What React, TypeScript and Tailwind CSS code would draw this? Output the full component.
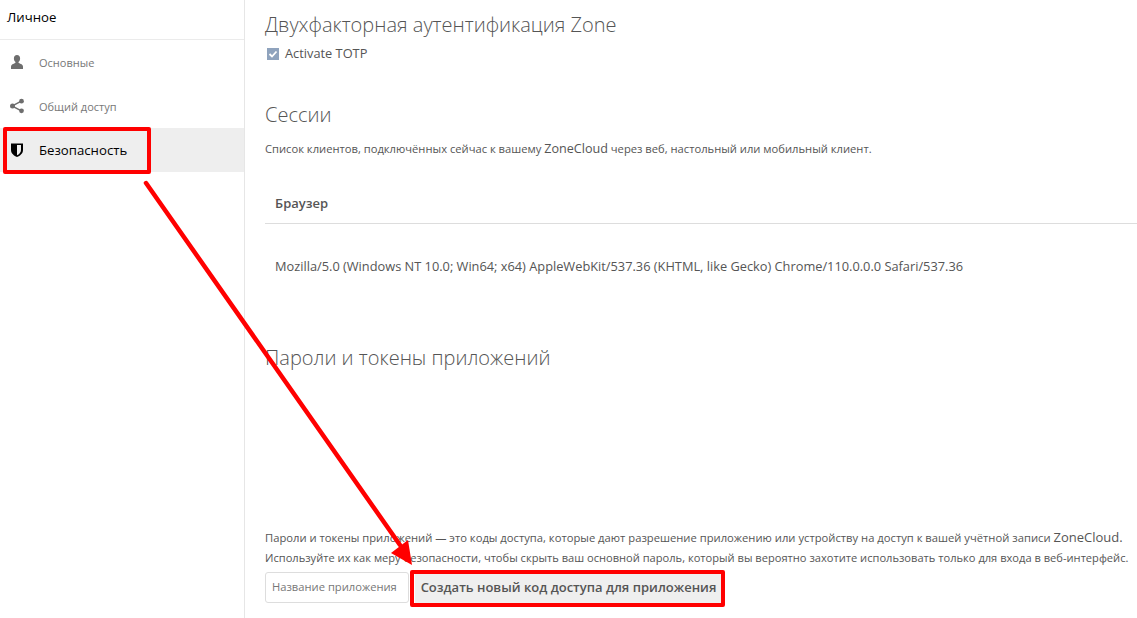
import React from 'react';

const font = { fontFamily: '"Open Sans", sans-serif' };

const UserIcon = () => (
  <svg width="16" height="16" viewBox="0 0 16 16" className="fill-[#6e6e6e]">
    <path d="M8 1C6 1 4.9 2.5 4.9 4.4c0 1.4.6 2.7 1.4 3.4.3.3.3 1-.2 1.300C4.400 10 2 10.600 2 12.500V15h12v-2.500c0-1.900-2.400-2.500-4.100-3.400-.5-.3-.5-1-.2-1.300.8-.7 1.400-2 1.400-3.400C11.100 2.500 10 1 8 1z" />
  </svg>
);

const ShareIcon = () => (
  <svg width="16" height="16" viewBox="0 0 16 16" className="fill-[#6e6e6e]">
    <circle cx="3.500" cy="8" r="2.500" />
    <circle cx="12.500" cy="3.200" r="2.400" />
    <circle cx="12.500" cy="12.800" r="2.400" />
    <path d="M3 7.300l9-4.800.7 1.300-9 4.800zM3.700 7.400l9 4.800-.7 1.300-9-4.800z" />
  </svg>
);

const ShieldIcon = () => (
  <svg width="16" height="16" viewBox="0 0 16 16">
    <path d="M2 1.500h12v6.500c0 3.500-3 5.800-6 7-3-1.200-6-3.500-6-7z" fill="#000" />
    <path d="M8 3v10.300c2-1 4-2.700 4-5.300V3z" fill="#eee" />
  </svg>
);

const NavItem = ({ icon, label, active = false }: { icon: React.ReactNode; label: string; active?: boolean }) => (
  <div className={`flex items-center h-11 pl-[9px] ${active ? 'bg-[#eeeeee]' : ''}`}>
    <span className="w-[30px] flex-shrink-0">{icon}</span>
    <span className={active ? 'pt-[1px] text-black font-medium text-[13.200px]' : 'pt-[2px] text-[#777777] text-[11px]'}>{label}</span>
  </div>
);

export default function App() {
  return (
    <div className="relative flex h-[618px] w-[1137px] overflow-hidden bg-white text-[#555555]" style={font}>
      <aside className="w-[245px] flex-shrink-0 border-r border-[#e6e6e6]">
        <div className="h-10 border-b border-[#ebebeb] pl-[7px] pt-[8px] text-[13.200px] text-black">Личное</div>
        <NavItem icon={<UserIcon />} label="Основные" />
        <NavItem icon={<ShareIcon />} label="Общий доступ" />
        <NavItem icon={<ShieldIcon />} label="Безопасность" active />
      </aside>

      <main className="flex-1 pl-5 min-w-0">
        <h2 className="pt-[11px] text-[20px] leading-[28px] font-light text-[#555555]">Двухфакторная аутентификация Zone</h2>
        <label className="mt-[6px] flex h-[18px] items-center text-[12.800px] text-[#555555]">
          <span className="ml-[2px] mr-[6px] flex h-[12px] w-[12px] items-center justify-center bg-[#8fa3bd]">
            <svg width="10" height="10" viewBox="0 0 10 10" fill="none" stroke="#fff" strokeWidth="1.800">
              <path d="M1.500 5l2.500 2.500 4.500-5" />
            </svg>
          </span>
          Activate TOTP
        </label>

        <h2 className="mt-[38px] text-[20px] leading-[28px] font-light text-[#555555]">Сессии</h2>
        <p className="mt-[11px] text-[11.200px] leading-[18px] text-[#555555] whitespace-nowrap">
          Список клиентов, подключённых сейчас к вашему <span className="text-[12.600px]">ZoneCloud</span> через веб, настольный или мобильный клиент.
        </p>

        <div className="mt-[26px] flex h-[40px] items-center border-b border-[#dddddd] pl-[10px] text-[13px] font-semibold text-[#555555]">
          Браузер
        </div>
        <div className="flex h-[88px] items-center pl-[10px] pb-[2px] text-[12.800px] text-[#555555] whitespace-nowrap">
          Mozilla/5.0 (Windows NT 10.0; Win64; x64) AppleWebKit/537.36 (KHTML, like Gecko) Chrome/110.0.0.0 Safari/537.36
        </div>

        <h2 className="mt-[32px] text-[20px] leading-[28px] font-light text-[#555555]">Пароли и токены приложений</h2>

        <p className="mt-[156px] text-[11.230px] leading-[18px] text-[#555555] whitespace-nowrap">
          Пароли и токены приложений — это коды доступа, которые дают разрешение приложению или устройству на доступ к вашей учётной записи <span className="text-[13px]">ZoneCloud.</span>
        </p>
        <p className="mt-[2px] text-[11.120px] leading-[18px] text-[#555555] whitespace-nowrap">
          Используйте их как меру безопасности, чтобы скрыть ваш основной пароль, который вы вероятно захотите использовать только для входа в веб-интерфейс.
        </p>
        <div className="mt-[5px] flex items-center">
          <div className="flex h-[31px] w-[144px] items-center rounded-[3px] border border-[#dddddd] pl-[6px] text-[11.200px] text-[#777777] whitespace-nowrap">
            Название приложения
          </div>
          <button className="ml-[6px] flex h-[31px] w-[307px] items-center justify-center bg-[#efefef] text-[13px] font-semibold text-[#555555] whitespace-nowrap">
            Создать новый код доступа для приложения
          </button>
        </div>
      </main>

      {/* annotations */}
      <div className="absolute left-[3px] top-[127px] h-[47px] w-[148px] rounded-[2px] border-[4px] border-[#ff0000]" />
      <div className="absolute left-[410px] top-[570px] h-[37px] w-[315px] rounded-[2px] border-[4px] border-[#ff0000]" />
      <svg className="absolute left-0 top-0" width="1137" height="618" viewBox="0 0 1137 618">
        <line x1="146" y1="183" x2="400" y2="545" stroke="#ff0000" strokeWidth="4.500" strokeLinecap="round" />
        <polygon points="412,565 391,553 408,540" fill="#ff0000" />
      </svg>
    </div>
  );
}
